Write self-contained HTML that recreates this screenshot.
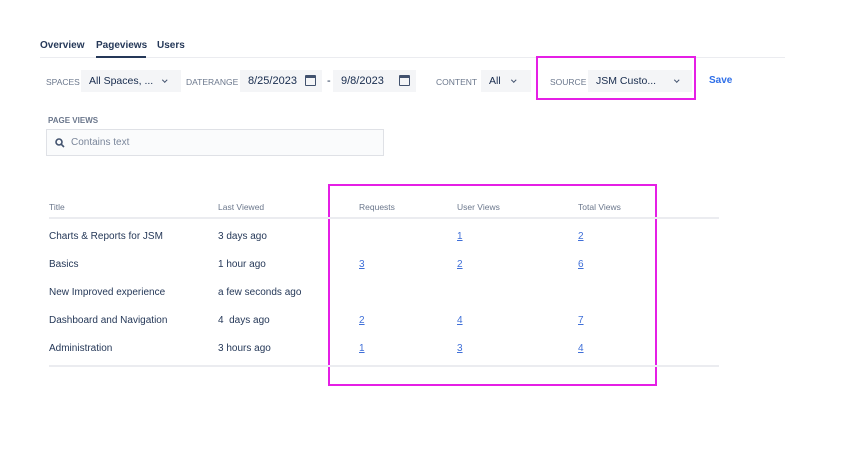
<!DOCTYPE html><html><head><style>
body{margin:0;width:846px;height:465px;background:#fff;font-family:"Liberation Sans",sans-serif;position:relative;overflow:hidden;color:#172b4d}
.a{position:absolute;white-space:nowrap}
.tab{font-size:10px;font-weight:bold;top:40px;color:#253858}
.lbl{font-size:8.5px;color:#6b778c;top:77px}
.sel{background:#f4f5f7;height:22px;top:70px;font-size:10.5px;line-height:22px;color:#172b4d;box-sizing:border-box;padding-left:8px}
.chev{position:absolute;top:8px;width:2.5px;height:2.5px;border-right:1.5px solid #42526e;border-bottom:1.5px solid #42526e;transform:rotate(45deg)}
.th{font-size:8.5px;color:#6b778c;top:202px}
.td{font-size:10px;color:#253858}
.lk{font-size:10px;color:#3f6fd8;text-decoration:underline}
.cal{position:absolute;top:5px;width:11px;height:11px;border:1.5px solid #42526e;box-sizing:border-box;border-top-width:3px;border-radius:1px}
</style></head><body>
<div class="a tab" style="left:40px">Overview</div>
<div class="a tab" style="left:96px">Pageviews</div>
<div class="a tab" style="left:157px">Users</div>
<div class="a" style="left:40px;top:57px;width:745px;height:1px;background:#ebecf0"></div>
<div class="a" style="left:96px;top:56px;width:50px;height:2px;background:#253858"></div>

<div class="a lbl" style="left:46px">SPACES</div>
<div class="a sel" style="left:81px;width:100px">All Spaces, ...<span class="chev" style="left:82px"></span></div>
<div class="a lbl" style="left:186px">DATERANGE</div>
<div class="a sel" style="left:240px;width:82px;font-size:11px">8/25/2023<span class="cal" style="left:65px"></span></div>
<div class="a" style="left:327px;top:75px;font-size:11px">-</div>
<div class="a sel" style="left:333px;width:83px;font-size:11px">9/8/2023<span class="cal" style="left:66px"></span></div>
<div class="a lbl" style="left:436px">CONTENT</div>
<div class="a sel" style="left:481px;width:50px">All<span class="chev" style="left:31px"></span></div>
<div class="a" style="left:536px;top:56px;width:160px;height:44px;border:2px solid #e51fe5;box-sizing:border-box"></div>
<div class="a lbl" style="left:550px">SOURCE</div>
<div class="a sel" style="left:588px;width:104px">JSM Custo...<span class="chev" style="left:87px"></span></div>
<div class="a" style="left:709px;top:75px;font-size:10px;color:#2f6fe8;font-weight:bold">Save</div>

<div class="a" style="left:48px;top:116px;font-size:8px;color:#6b778c;font-weight:bold">PAGE VIEWS</div>
<div class="a" style="left:46px;top:129px;width:338px;height:27px;border:1.5px solid #dfe1e6;background:#fafbfc;box-sizing:border-box"></div>
<svg class="a" style="left:55px;top:138px" width="10" height="10"><circle cx="4" cy="4" r="3" stroke="#42526e" stroke-width="1.6" fill="none"/><line x1="6.3" y1="6.3" x2="9" y2="9" stroke="#42526e" stroke-width="1.6"/></svg>
<div class="a" style="left:71px;top:137px;font-size:10px;color:#7a869a">Contains text</div>

<div class="a" style="left:328px;top:184px;width:329px;height:202px;border:2px solid #e51fe5;box-sizing:border-box"></div>
<div class="a th" style="left:49px">Title</div>
<div class="a th" style="left:218px">Last Viewed</div>
<div class="a th" style="left:359px">Requests</div>
<div class="a th" style="left:457px">User Views</div>
<div class="a th" style="left:578px">Total Views</div>
<div class="a" style="left:49px;top:217px;width:670px;height:2px;background:#ebecf0"></div>

<div class="a td" style="left:49px;top:231px">Charts &amp; Reports for JSM</div>
<div class="a td" style="left:218px;top:231px">3 days ago</div>
<div class="a lk" style="left:457px;top:231px">1</div>
<div class="a lk" style="left:578px;top:231px">2</div>

<div class="a td" style="left:49px;top:259px">Basics</div>
<div class="a td" style="left:218px;top:259px">1 hour ago</div>
<div class="a lk" style="left:359px;top:259px">3</div>
<div class="a lk" style="left:457px;top:259px">2</div>
<div class="a lk" style="left:578px;top:259px">6</div>

<div class="a td" style="left:49px;top:287px">New Improved experience</div>
<div class="a td" style="left:218px;top:287px">a few seconds ago</div>

<div class="a td" style="left:49px;top:315px">Dashboard and Navigation</div>
<div class="a td" style="left:218px;top:315px">4&nbsp; days ago</div>
<div class="a lk" style="left:359px;top:315px">2</div>
<div class="a lk" style="left:457px;top:315px">4</div>
<div class="a lk" style="left:578px;top:315px">7</div>

<div class="a td" style="left:49px;top:343px">Administration</div>
<div class="a td" style="left:218px;top:343px">3 hours ago</div>
<div class="a lk" style="left:359px;top:343px">1</div>
<div class="a lk" style="left:457px;top:343px">3</div>
<div class="a lk" style="left:578px;top:343px">4</div>
<div class="a" style="left:49px;top:365px;width:670px;height:2px;background:#ebecf0"></div>
</body></html>
